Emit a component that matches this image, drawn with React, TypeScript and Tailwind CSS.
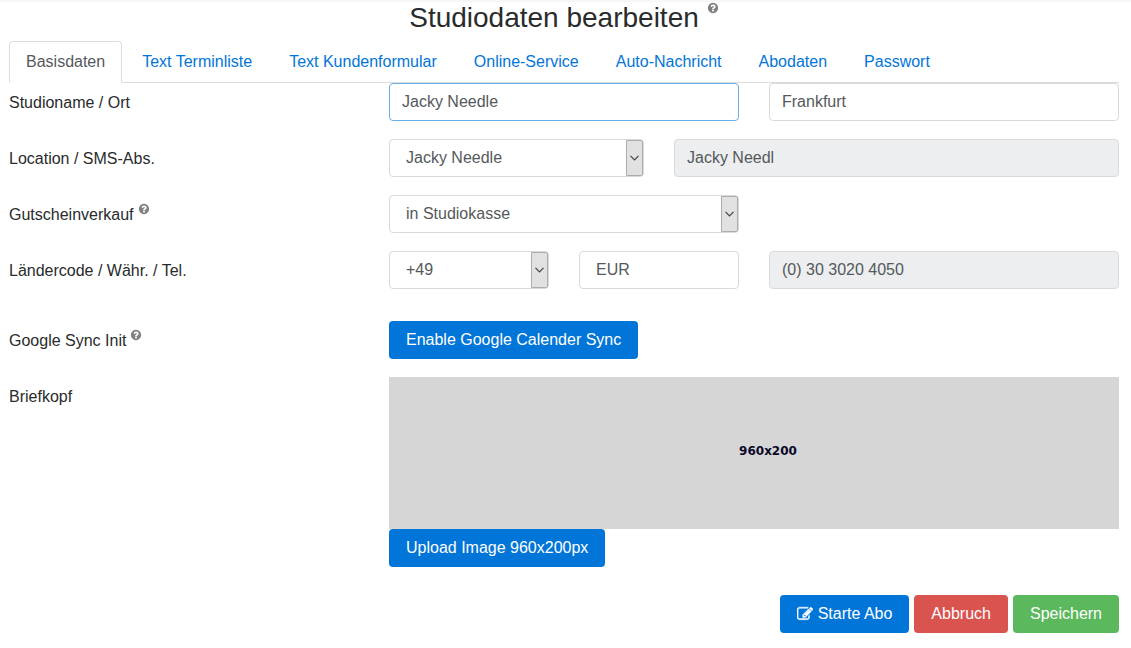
import React, { useState } from 'react';

const tabs = [
  'Basisdaten',
  'Text Terminliste',
  'Text Kundenformular',
  'Online-Service',
  'Auto-Nachricht',
  'Abodaten',
  'Passwort',
];

const inputClass =
  'block w-full h-[38px] rounded border border-[#d9d9d9] bg-white text-[#55595c] outline-none focus:border-[#66afe9]';

const buttonClass = 'h-[38px] rounded px-[17px] text-white cursor-pointer';

const HelpIcon: React.FC = () => (
  <svg viewBox="0 0 1792 1792" className="w-3 h-3 shrink-0 fill-[#818181]" role="img" aria-label="Hilfe">
    <path d="M1024 1376v-192q0-14-9-23t-23-9h-192q-14 0-23 9t-9 23v192q0 14 9 23t23 9h192q14 0 23-9t9-23zm256-672q0-88-55.5-163t-138.5-116-170-41q-243 0-371 213-15 24 8 42l132 100q7 6 19 6 16 0 25-12 53-68 86-92 34-24 86-24 48 0 85.5 26t37.5 59q0 38-20 61t-68 45q-63 28-115.5 86.5t-52.5 125.5v36q0 14 9 23t23 9h192q14 0 23-9t9-23q0-19 21.5-49.5t54.5-49.5q32-18 49-28.5t46-35 44.5-48 28-60.5 12.5-81zm384 192q0 209-103 385.5t-279.5 279.5-385.5 103-385.5-103-279.5-279.5-103-385.5 103-385.5 279.5-279.5 385.5-103 385.5 103 279.5 279.5 103 385.5z" />
  </svg>
);

const EditIcon: React.FC = () => (
  <svg viewBox="0 0 1792 1792" className="w-4 h-4 fill-current stroke-current" strokeWidth="50" aria-hidden="true">
    <path d="M888 1184l116-116-152-152-116 116v56h96v96h56zm440-720q-16-16-33 1l-350 350q-17 17-1 33t33-1l350-350q17-17 1-33zm80 594v190q0 119-84.5 203.5t-203.5 84.5h-832q-119 0-203.5-84.5t-84.5-203.5v-832q0-119 84.5-203.5t203.5-84.5h832q63 0 117 25 15 7 18 23 3 17-9 29l-49 49q-14 14-32 8-23-6-45-6h-832q-66 0-113 47t-47 113v832q0 66 47 113t113 47h832q66 0 113-47t47-113v-126q0-13 9-22l64-64q15-15 35-7t20 29zm-96-738l288 288-672 672h-288v-288zm444 132l-92 92-288-288 92-92q28-28 68-28t68 28l152 152q28 28 28 68t-28 68z" />
  </svg>
);

interface RowProps {
  label: string;
  htmlFor: string;
  help?: boolean;
  children: React.ReactNode;
}

const Row: React.FC<RowProps> = ({ label, htmlFor, help, children }) => (
  <div className="grid grid-cols-12 gap-x-[30px]">
    <div className="col-span-4 flex items-start gap-1 pt-2">
      <label htmlFor={htmlFor}>{label}</label>
      {help && <HelpIcon />}
    </div>
    {children}
  </div>
);

interface SelectProps {
  id: string;
  options: string[];
}

const Select: React.FC<SelectProps> = ({ id, options }) => (
  <div className="relative">
    <select id={id} className={`${inputClass} appearance-none pl-4 pr-6`}>
      {options.map(o => (
        <option key={o}>{o}</option>
      ))}
    </select>
    <span className="absolute inset-y-px right-px w-[17px] flex items-center justify-center rounded-r-xs border border-[#adadad] bg-[#e1e1e1] pointer-events-none">
      <svg viewBox="0 0 9 6" className="w-[9px] h-[6px]" fill="none" stroke="#444" strokeWidth="1.2">
        <path d="M0.5 0.8l4 4 4-4" />
      </svg>
    </span>
  </div>
);

export default function App() {
  const [active, setActive] = useState(0);

  return (
    <main className="border-t-2 border-[#f7f7f7] bg-white pl-[9px] pr-3 pb-[15px] font-['Liberation_Sans',Arial,sans-serif] text-base text-[#292b2c]">
      <div className="flex items-start justify-center gap-2 mb-[7px]">
        <h1 className="text-[28px] leading-8">Studiodaten bearbeiten</h1>
        <HelpIcon />
      </div>

      <nav className="flex gap-[3px] border-b border-[#ddd]">
        {tabs.map((t, i) => (
          <a
            key={t}
            href="#"
            onClick={e => { e.preventDefault(); setActive(i); }}
            className={`-mb-px rounded-t border px-4 py-2 ${
              i === active ? 'border-[#ddd] border-b-white bg-white text-[#55595c]' : 'border-transparent text-[#0275d8]'
            }`}
          >
            {t}
          </a>
        ))}
      </nav>

      <form onSubmit={e => e.preventDefault()}>
        <div className="flex flex-col gap-[18px]">
          <Row label="Studioname / Ort" htmlFor="studio">
            <div className="col-span-4">
              <input id="studio" defaultValue="Jacky Needle" autoFocus className={`${inputClass} px-3 caret-transparent`} />
            </div>
            <div className="col-span-4">
              <input aria-label="Ort" defaultValue="Frankfurt" className={`${inputClass} px-3`} />
            </div>
          </Row>

          <Row label="Location / SMS-Abs." htmlFor="location">
            <div className="col-span-3">
              <Select id="location" options={['Jacky Needle']} />
            </div>
            <div className="col-span-5">
              <input aria-label="SMS-Absender" defaultValue="Jacky Needl" disabled className={`${inputClass} px-3 disabled:bg-[#eceeef]`} />
            </div>
          </Row>

          <Row label="Gutscheinverkauf" htmlFor="voucher" help>
            <div className="col-span-4">
              <Select id="voucher" options={['in Studiokasse']} />
            </div>
          </Row>

          <Row label="Ländercode / Währ. / Tel." htmlFor="country">
            <div className="col-span-2">
              <Select id="country" options={['+49']} />
            </div>
            <div className="col-span-2">
              <input aria-label="Währung" defaultValue="EUR" className={`${inputClass} px-4`} />
            </div>
            <div className="col-span-4">
              <input aria-label="Telefon" type="tel" defaultValue="(0) 30 3020 4050" disabled className={`${inputClass} px-3 disabled:bg-[#eceeef]`} />
            </div>
          </Row>
        </div>

        <div className="flex flex-col gap-[18px] mt-8">
          <Row label="Google Sync Init" htmlFor="sync" help>
            <div className="col-span-8">
              <button id="sync" type="button" className={`${buttonClass} block bg-[#0275d8]`}>
                Enable Google Calender Sync
              </button>
            </div>
          </Row>

          <Row label="Briefkopf" htmlFor="upload">
            <div className="col-span-8">
              <div className="flex aspect-[730/152] items-center justify-center bg-[#d6d6d6] pl-7 pb-1 font-['DejaVu_Sans',sans-serif] text-xs font-bold text-[#0c0829]">
                960x200
              </div>
              <button id="upload" type="button" className={`${buttonClass} block bg-[#0275d8]`}>
                Upload Image 960x200px
              </button>
            </div>
          </Row>
        </div>

        <div className="flex justify-end gap-[5px] mt-7">
          <button type="button" className={`${buttonClass} flex items-center gap-[5px] bg-[#0275d8]`}>
            <EditIcon />
            Starte Abo
          </button>
          <button type="button" className={`${buttonClass} bg-[#d9534f]`}>Abbruch</button>
          <button type="submit" className={`${buttonClass} bg-[#5cb85c]`}>Speichern</button>
        </div>
      </form>
    </main>
  );
}
